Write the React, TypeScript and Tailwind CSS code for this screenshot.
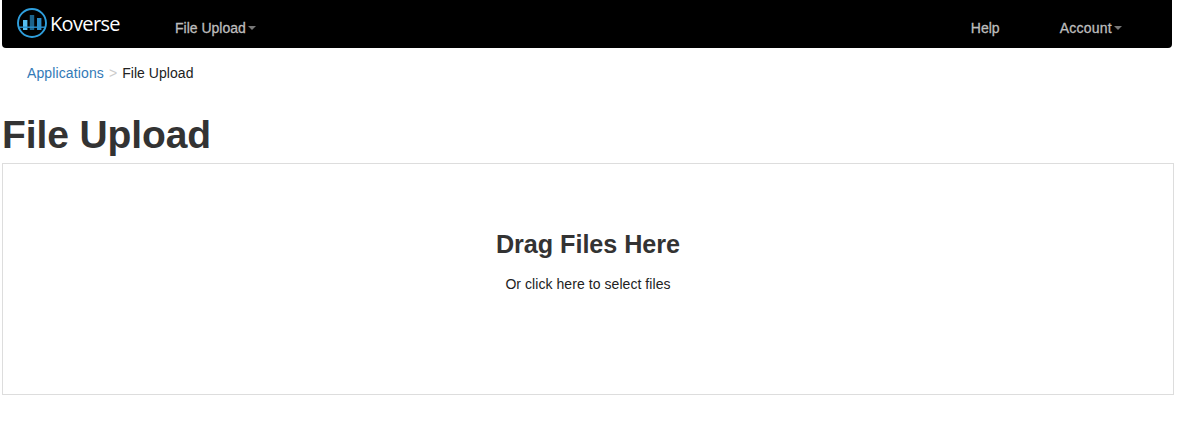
function Logo() {
  return (
    <svg className="block h-8 w-8 shrink-0" viewBox="0 0 32 32" aria-hidden="true">
      <rect x="7" y="13" width="4.4" height="10" fill="#56bdf0" />
      <rect x="13.8" y="8" width="4.4" height="15" fill="#1c638b" />
      <rect x="21" y="11" width="4.4" height="12" fill="#2b8cc6" />
      <path d="M2.5 20.2h27" stroke="#2a8ecb" strokeWidth="1.4" />
      <circle cx="16" cy="16" r="14" fill="none" stroke="#2f9fdd" strokeWidth="1.9" />
    </svg>
  );
}

function Caret() {
  return (
    <svg className="ml-0.5 block h-1 w-2 shrink-0" viewBox="0 0 8 4" aria-hidden="true">
      <path d="M0 0h8L4 4z" fill="#777777" />
    </svg>
  );
}

export default function App() {
  return (
    <div className="h-[423px] overflow-hidden bg-white pl-0.5 font-['Liberation_Sans',Arial,sans-serif] text-sm leading-5 text-[#222222]">
      <nav className="flex h-12 w-[1170px] rounded-b-[4px] bg-black pl-3.5 text-[#bdbdbd]">
        <a href="#" className="flex h-12 w-[159px] items-start pt-[7px] text-white">
          <Logo />
          <span className="ml-[2px] mt-[3px] font-['Open_Sans',sans-serif] text-[20px] leading-[28px] tracking-[-0.65px]">Koverse</span>
        </a>
        <a href="#" className="flex h-5 items-center mt-[18px] [-webkit-text-stroke:0.3px_#bdbdbd]">
          File Upload
          <Caret />
        </a>
        <div className="ml-auto mt-[18px] flex h-5 items-center gap-[60px] pr-[50px] [-webkit-text-stroke:0.3px_#bdbdbd]">
          <a href="#">Help</a>
          <a href="#" className="flex items-center tracking-[0.25px]">
            Account
            <Caret />
          </a>
        </div>
      </nav>
      <div className="mt-[15px] flex h-5 items-center pl-[25px]">
        <a href="#" className="tracking-[0.12px] text-[#337ab7]">Applications</a>
        <span className="px-[5px] text-[#cccccc]">&gt;</span>
        <span className="tracking-[0.05px]">File Upload</span>
      </div>
      <h1 className="mt-[30px] h-[50px] whitespace-nowrap text-[39px] font-bold leading-[44px] tracking-[-0.1px] text-[#333333]">File Upload</h1>
      <section className="flex h-[232px] w-[1172px] flex-col items-center border border-[#dddddd]">
        <h2 className="mt-16 text-[25.2px] font-bold leading-[32px] tracking-[-0.05px] text-[#333333]">Drag Files Here</h2>
        <p className="mt-3.5 tracking-[0.06px]">Or click here to select files</p>
      </section>
    </div>
  );
}
